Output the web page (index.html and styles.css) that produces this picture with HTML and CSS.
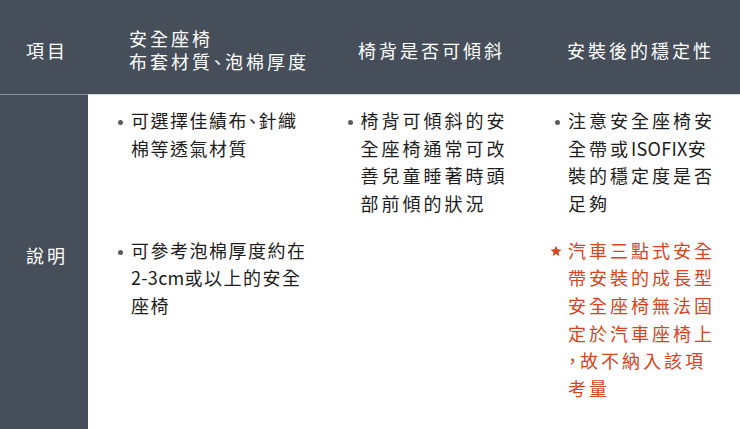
FILE: index.html
```html
<!DOCTYPE html>
<html lang="zh-Hant">
<head>
<meta charset="utf-8">
<link rel="stylesheet" href="styles.css">
</head>
<body>
<div class="table">
  <div class="thead">
    <div class="th th-1"><span>項目</span></div>
    <div class="th th-2"><span>安全座椅<br>布套材質<span class="half">、</span>泡棉厚度</span></div>
    <div class="th th-3"><span>椅背是否可傾斜</span></div>
    <div class="th th-4"><span>安裝後的穩定性</span></div>
  </div>
  <div class="tbody">
    <div class="rowhead"><span>說明</span></div>
    <div class="td c2 r1"><div class="item"><span class="dot"></span><span class="txt">可選擇佳績布<span class="half">、</span>針織棉等透氣材質</span></div></div>
    <div class="td c3 r1"><div class="item"><span class="dot"></span><span class="txt">椅背可傾斜的安全座椅通常可改善兒童睡著時頭部前傾的狀況</span></div></div>
    <div class="td c4 r1"><div class="item"><span class="dot"></span><span class="txt">注意安全座椅安全帶或<span class="latin">ISOFIX</span>安裝的穩定度是否足夠</span></div></div>
    <div class="td c2 r2"><div class="item"><span class="dot"></span><span class="txt">可參考泡棉厚度約在<span class="latin">2-3cm</span>或以上的安全座椅</span></div></div>
    <div class="td c3 r2"></div>
    <div class="td c4 r2"><div class="item warn"><svg class="star" viewBox="0 0 24 24" width="12" height="12"><path d="M12 1.5l3.1 7.2 7.8.7-5.9 5.1 1.8 7.6L12 18.1l-6.8 4 1.8-7.6-5.9-5.1 7.8-.7z" fill="#d5441c"/></svg><span class="txt anywhere">汽車三點式安全帶安裝的成長型安全座椅無法固定於汽車座椅上<span class="half">，</span>故不納入該項考量</span></div></div>
  </div>
</div>
</body>
</html>
```
FILE: styles.css
```css
* { box-sizing: border-box; }
html, body {
  margin: 0;
  padding: 0;
  width: 740px;
  height: 429px;
  overflow: hidden;
  background: #ffffff;
}
body {
  font-family: "Noto Sans CJK TC", "Noto Sans", sans-serif;
  font-size: 18px;
  color: #1c1c1c;
}
.table {
  display: flex;
  flex-direction: column;
  height: 429px;
}
.thead {
  display: grid;
  grid-template-columns: 88px 247px 210px 195px;
  height: 94px;
  background: #454e59;
  color: #ffffff;
  letter-spacing: 3px;
}
.th {
  display: flex;
  align-items: center;
  padding-top: 6px;
  line-height: 23px;
}
.th-1 { padding-left: 26px; }
.th-2 { padding-left: 41px; }
.th-3 { padding-left: 23px; }
.th-4 { padding-left: 22px; }
.half { font-feature-settings: "halt"; }
.latin { letter-spacing: 0.3px; }
.tbody {
  flex: 1;
  display: grid;
  grid-template-columns: 88px 247px 210px 195px;
  grid-template-rows: auto 1fr;
  line-height: 27.6px;
}
.rowhead {
  grid-row: 1 / 3;
  grid-column: 1;
  background: #454e59;
  color: #ffffff;
  letter-spacing: 3px;
  display: flex;
  align-items: center;
  padding-left: 26px;
  padding-bottom: 13px;
  border-top: 1px solid #88929b;
}
.td.r1 {
  border-top: 1px solid #cfd8dc;
  padding-top: 12px;
  grid-row: 1;
}
.td.r2 {
  padding-top: 19.5px;
  grid-row: 2;
}
.c2 { grid-column: 2; padding-left: 30px; padding-right: 24px; letter-spacing: 1.5px; }
.c3 { grid-column: 3; padding-left: 12.5px; padding-right: 24px; letter-spacing: 3px; }
.c4 { grid-column: 4; padding-left: 10px; padding-right: 15.5px; letter-spacing: 3px; }
.item {
  display: flex;
  align-items: flex-start;
}
.dot {
  flex: none;
  width: 5px;
  height: 5px;
  border-radius: 50%;
  background: #5c5c5c;
  margin-top: 13px;
  margin-right: 8px;
}
.txt { flex: 1; min-width: 0; }
.warn { color: #d5441c; }
.star {
  flex: none;
  margin-left: -5px;
  margin-right: 6px;
  margin-top: 8px;
}
.anywhere { line-break: anywhere; }
```
